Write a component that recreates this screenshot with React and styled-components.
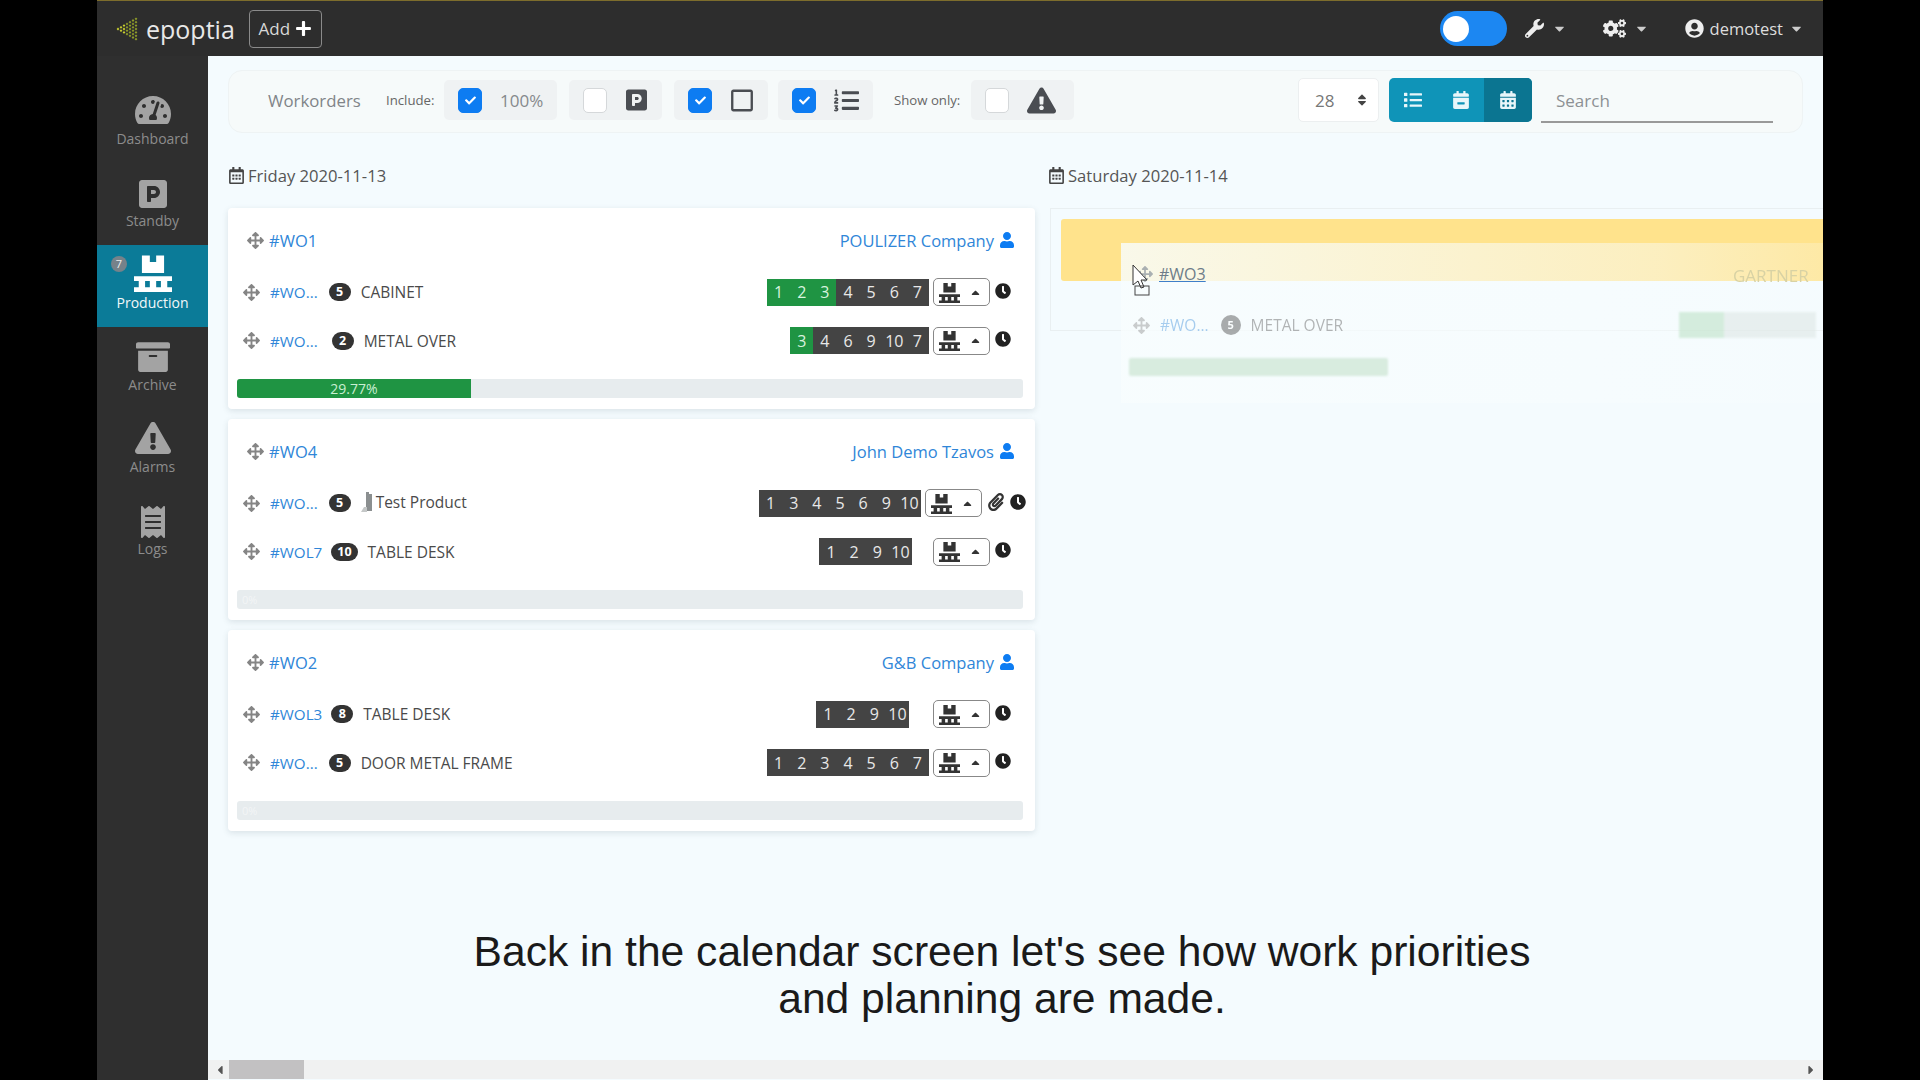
import React from "react";
import styled, { createGlobalStyle } from "styled-components";
import {
  FaArchive, FaArrowsAlt, FaCalendarAlt, FaCalendarMinus, FaCaretDown, FaCaretUp, FaCaretLeft, FaCaretRight,
  FaCheck, FaClock, FaCogs, FaExclamationTriangle, FaList, FaListOl, FaParking, FaPaperclip, FaPlus,
  FaReceipt, FaRegCalendarAlt, FaRegSquare, FaSort, FaTachometerAlt, FaUser, FaUserCircle, FaWrench,
} from "react-icons/fa";

const Global = createGlobalStyle`
  html, body { margin: 0; padding: 0; height: 100%; background: #000; overflow: hidden; }
  body { font-family: "Open Sans", "Noto Sans", sans-serif; color: #444; }
  * { box-sizing: border-box; }
`;

const Screen = styled.div`
  width: 1920px;
  height: 1080px;
  background: #000;
  display: flex;
  justify-content: center;
  position: relative;
`;

const Frame = styled.div`
  width: 1726px;
  height: 1080px;
  display: flex;
  flex-direction: column;
`;

const TopBar = styled.header`
  height: 56px;
  flex: none;
  background: #2d2d2d;
  border-top: 1px solid #7d6d2c;
  display: flex;
  align-items: center;
  padding-left: 19px;
  color: #e6e6e6;
`;

const Brand = styled.div`
  display: flex;
  align-items: center;
  font-size: 25px;
  gap: 8px;
  color: #e8e8e8;
`;

const AddButton = styled.button`
  margin-left: 14px;
  width: 73px;
  height: 38px;
  background: transparent;
  border: 1px solid #8a8a8a;
  border-radius: 4px;
  color: #d8d8d8;
  font: 17px "Open Sans", sans-serif;
  display: flex;
  align-items: center;
  justify-content: center;
  gap: 5px;
  padding: 0;
  svg { color: #fff; font-size: 17px; }
`;

const TopRight = styled.div`
  margin-left: auto;
  display: flex;
  align-items: center;
  padding-right: 19px;
`;

const Toggle = styled.div`
  width: 67px;
  height: 35px;
  border-radius: 18px;
  background: #1c87f2;
  display: flex;
  align-items: center;
  padding-left: 3px;
  margin-right: 18px;
  &::before {
    content: "";
    width: 26px;
    height: 26px;
    border-radius: 50%;
    background: #fff;
  }
`;

const TopMenu = styled.div`
  display: flex;
  align-items: center;
  gap: ${p => p.$gap || 8}px;
  margin-right: ${p => p.$after || 0}px;
  font-size: ${p => p.$text || 17}px;
  color: #ddd;
  & > svg:first-child { font-size: ${p => p.$icon || 19}px; color: #eee; }
  & > svg:last-child { font-size: 15px; color: #ccc; }
`;

const Body = styled.div`
  flex: 1;
  display: flex;
  min-height: 0;
`;

const Sidebar = styled.nav`
  width: 111px;
  flex: none;
  background: #2f2f2f;
  padding-top: 25px;
`;

const NavItem = styled.div`
  position: relative;
  height: 82px;
  display: flex;
  flex-direction: column;
  align-items: center;
  justify-content: flex-end;
  padding-bottom: 15px;
  gap: 1px;
  font-size: 14px;
  background: ${p => (p.$active ? "#0b7b98" : "transparent")};
  color: ${p => (p.$active ? "#f2f8fa" : "#8c8c8c")};
  svg { color: ${p => (p.$active ? "#fff" : "#a3a3a3")}; }
`;

const NavBadge = styled.span`
  position: absolute;
  left: 14px;
  top: 11px;
  width: 16px;
  height: 16px;
  border-radius: 50%;
  background: #76828a;
  color: #eee;
  font-size: 11px;
  line-height: 16px;
  text-align: center;
`;

const Main = styled.main`
  flex: 1;
  position: relative;
  background: #f4fbfe;
  overflow: hidden;
  padding: 14px 0 0 20px;
`;

const Toolbar = styled.div`
  width: 1575px;
  height: 63px;
  background: #f6fafa;
  border: 1px solid #eef3f4;
  border-radius: 14px;
  display: flex;
  align-items: center;
  padding: 0 29px 3px 39px;
`;

const ToolTitle = styled.span`
  width: 93px;
  font-size: 16.8px;
  color: #808488;
  white-space: nowrap;
`;

const ToolLabel = styled.span`
  width: ${p => p.$w}px;
  font-size: 13.2px;
  color: #666;
  margin-left: ${p => p.$left}px;
  margin-right: ${p => p.$right}px;
  white-space: nowrap;
`;

const Group = styled.div`
  width: ${p => p.$w}px;
  height: 40px;
  background: #eff2f3;
  border-radius: 5px;
  display: flex;
  align-items: center;
  gap: 18px;
  padding: 0 14px;
  margin-right: ${p => p.$after || 0}px;
  color: #4a4d52;
`;

const Check = styled.span`
  width: 24px;
  height: 25px;
  flex: none;
  border-radius: 5px;
  background: ${p => (p.$on ? "#0d7cf2" : "#fff")};
  border: 1px solid ${p => (p.$on ? "#0d7cf2" : "#d5d8da")};
  display: flex;
  align-items: center;
  justify-content: center;
  color: #fff;
  font-size: 11px;
`;

const Percent = styled.span`
  font-size: 17px;
  color: #85898c;
`;

const Picker = styled.div`
  margin-left: auto;
  width: 81px;
  height: 44px;
  background: #fff;
  border: 1px solid #eceff0;
  border-radius: 5px;
  display: flex;
  align-items: center;
  justify-content: space-between;
  padding: 0 9px 0 16px;
  font-size: 17px;
  color: #777;
  svg { color: #444; font-size: 14px; }
`;

const ViewButtons = styled.div`
  margin-left: 10px;
  display: flex;
  width: 143px;
  height: 44px;
  border-radius: 5px;
  overflow: hidden;
  background: #0f94b8;
`;

const ViewButton = styled.span`
  width: 48px;
  display: flex;
  align-items: center;
  justify-content: center;
  color: #e8f6fa;
  font-size: 18px;
  background: ${p => (p.$active ? "#0b7591" : "transparent")};
`;

const SearchBox = styled.div`
  margin-left: 9px;
  width: 232px;
  height: 45px;
  border-bottom: 2px solid #999;
  display: flex;
  align-items: center;
  padding: 2px 0 0 15px;
  font-size: 17px;
  color: #8d9194;
`;

const Columns = styled.div`
  display: grid;
  grid-template-columns: 807px 840px;
  column-gap: 13px;
  margin-top: 30px;
`;

const DayColumn = styled.section`
  display: flex;
  flex-direction: column;
  gap: 10px;
`;

const DayTitle = styled.div`
  height: 24px;
  margin-bottom: 11px;
  display: flex;
  align-items: center;
  gap: 3px;
  font-size: 16.6px;
  color: #555;
  svg { font-size: 17px; color: #444; }
`;

const Card = styled.article`
  background: #fff;
  border-radius: 4px;
  box-shadow: 0 2px 6px rgba(60, 80, 90, 0.14);
  padding: 10px 12px 11px 9px;
  height: 201px;
`;

const CardHead = styled.div`
  height: 44px;
  margin-bottom: 6px;
  display: flex;
  align-items: center;
  padding: 0 8px 0 10px;
  font-size: 16.5px;
`;

const Drag = styled(FaArrowsAlt)`
  color: #858585;
  font-size: 17px;
  flex: none;
`;

const Link = styled.a`
  color: ${p => (p.$under ? "#6d7c89" : "#2f86d8")};
  margin-left: ${p => p.$left}px;
  white-space: nowrap;
  text-decoration: ${p => (p.$under ? "underline #3f7fc9" : "none")};
`;

const Customer = styled.span`
  margin-left: auto;
  display: flex;
  align-items: center;
  gap: 5px;
  color: #2f86d8;
  white-space: nowrap;
  svg { color: #0d7cf2; font-size: 16px; }
`;

const Row = styled.div`
  height: 48.5px;
  display: flex;
  align-items: center;
  padding: 0 ${p => (p.$attach ? 0 : 12)}px 0 6px;
  margin-right: ${p => (p.$attach ? -3 : 0)}px;
  font-size: 15.5px;
  position: relative;
  ${Link} { font-size: 15.2px; }
`;

const Count = styled.span`
  margin-left: ${p => p.$left}px;
  min-width: 22px;
  height: 18px;
  padding: 0 6px;
  border-radius: 9px;
  background: #333;
  color: #fff;
  font-size: 12.5px;
  font-weight: 700;
  line-height: 18px;
  text-align: center;
  flex: none;
`;

const ProductName = styled.span`
  margin-left: ${p => (p.$thumb ? 3 : 10)}px;
  margin-top: ${p => (p.$thumb ? -3 : 0)}px;
  color: #4a4a4a;
  white-space: nowrap;
`;

const Steps = styled.div`
  margin-left: auto;
  margin-right: ${p => p.$gap}px;
  display: flex;
  height: 27px;
`;

const Step = styled.span`
  width: 23.15px;
  display: flex;
  align-items: center;
  justify-content: center;
  background: ${p => (p.$done ? "#1f9443" : "#444")};
  color: ${p => (p.$done ? "#d8f3df" : "#e8e8e8")};
  font-size: 16px;
`;

const StationButton = styled.div`
  width: 57px;
  height: 28px;
  flex: none;
  border: 1px solid #888;
  border-radius: 5px;
  background: #fff;
  display: flex;
  align-items: center;
  justify-content: space-between;
  padding: 0 7px 0 5px;
  color: #333;
  svg:last-child { font-size: 13px; }
`;

const Clock = styled(FaClock)`
  flex: none;
  margin-left: 5px;
  margin-top: -3px;
  font-size: 16px;
  color: #222;
`;

const Clip = styled(FaPaperclip)`
  flex: none;
  margin-left: 5px;
  margin-top: -3px;
  font-size: 18px;
  color: #333;
`;

const Progress = styled.div`
  margin-top: 14px;
  height: 19px;
  border-radius: 3px;
  background: #e7ecee;
  overflow: hidden;
  display: flex;
`;

const ProgressFill = styled.div`
  background: #1f9443;
  color: #c9efd2;
  font-size: 14px;
  line-height: 19px;
  text-align: center;
`;

const EmptyLabel = styled.span`
  padding-left: 5px;
  color: #f3f5f6;
  font-size: 11px;
  line-height: 19px;
`;

const DropCard = styled.div`
  height: 123px;
  margin-left: 2px;
  border: 1px solid #e9eff1;
  border-right: 0;
  padding: 10px 0 0 10px;
  position: relative;
`;

const Highlight = styled.div`
  height: 62px;
  background: #ffe38c;
  border-radius: 3px;
`;

const Ghost = styled.div`
  position: absolute;
  left: 70px;
  top: 34px;
  width: 720px;
  height: 160px;
  background: linear-gradient(90deg, rgba(248, 253, 254, 0.82), rgba(248, 253, 254, 0.45) 75%, rgba(248, 253, 254, 0.2));
  display: flex;
  flex-direction: column;
  padding: 16px 0 0 12px;
  font-size: 16px;
`;

const GhostHead = styled.div`
  display: flex;
  align-items: center;
  height: 30px;
  svg { color: #aab0b2; font-size: 16px; margin-left: 4px; }
`;

const GhostRow = styled.div`
  display: flex;
  align-items: center;
  height: 30px;
  margin-top: 21px;
  opacity: 0.4;
  color: #555;
  font-size: 15.5px;
`;

const GhostBadge = styled.span`
  margin-left: 12px;
  width: 20px;
  height: 20px;
  border-radius: 50%;
  background: #333;
  color: #fff;
  font-size: 11px;
  font-weight: 700;
  line-height: 20px;
  text-align: center;
`;

const GhostSteps = styled.div`
  position: absolute;
  left: 558px;
  top: 69px;
  width: 137px;
  height: 26px;
  background: linear-gradient(90deg, #bfe3c8 45px, #dfe8e6 45px);
  opacity: 0.6;
  filter: blur(1px);
`;

const GhostCustomer = styled.span`
  position: absolute;
  left: 612px;
  top: 21px;
  color: #d8d2a4;
  font-size: 17px;
  filter: blur(0.7px);
`;

const GhostBar = styled.div`
  width: 259px;
  height: 18px;
  margin: 18px 0 0 -4px;
  border-radius: 2px;
  background: #d8ecdf;
  filter: blur(1px);
`;

const Cursor = styled.svg`
  position: absolute;
  left: 1132px;
  top: 264px;
  z-index: 3;
`;

const Caption = styled.div`
  position: absolute;
  left: 97px;
  width: 1810px;
  top: 928px;
  text-align: center;
  font-family: "Liberation Sans", Arial, sans-serif;
  font-size: 42.6px;
  line-height: 47px;
  color: #1a1a1a;
  z-index: 5;
`;

const ScrollBar = styled.div`
  position: absolute;
  left: 0;
  right: 0;
  bottom: 1px;
  height: 19px;
  background: #f0f1f1;
  display: flex;
  align-items: center;
  justify-content: space-between;
  padding: 0 5px;
  color: #555;
  font-size: 14px;
`;

const ScrollThumb = styled.span`
  position: absolute;
  left: 21px;
  top: 0;
  width: 75px;
  height: 19px;
  background: #c2c1c2;
`;

const ProductThumb = styled.svg`
  margin-left: 10px;
  flex: none;
`;

// dithered arrowhead, tip on the left
const Logo = () => (
  <svg width="22" height="26" viewBox="0 0 22 26">
    {[0, 1, 2, 3, 4, 5, 6].map(col =>
      Array.from({ length: col + 1 }).map((_, i) => (
        <path
          key={col + "-" + i}
          d={`M${col * 3} ${13 - col * 1.7 + i * 3.4 - 1.4}l1.4 1.4-1.4 1.4-1.4-1.4z`}
          transform="translate(2 0)"
          fill={col < 3 ? "#c9cf2e" : "#8f9c2a"}
        />
      ))
    )}
  </svg>
);

const Pallet = ({ size = 22, color = "currentColor" }) => (
  <svg width={size} height={size} viewBox="0 0 24 24" fill={color}>
    <path d="M5 1h5v4h4V1h5v11H5z" />
    <path d="M0 14h24v3H0zM0 21h24v3H0zM3 17h4v4H3zM10 17h4v4h-4zM17 17h4v4h-4z" />
  </svg>
);

const navItems = [
  { label: "Dashboard", icon: <FaTachometerAlt size={36} /> },
  { label: "Standby", icon: <FaParking size={32} /> },
  { label: "Production", icon: <Pallet size={38} />, active: true, badge: 7 },
  { label: "Archive", icon: <FaArchive size={34} /> },
  { label: "Alarms", icon: <FaExclamationTriangle size={36} /> },
  { label: "Logs", icon: <FaReceipt size={32} /> },
];

const orders = [
  {
    id: "#WO1", customer: "POULIZER Company", progress: 29.77,
    rows: [
      { id: "#WO...", count: 5, name: "CABINET", steps: [1, 2, 3, 4, 5, 6, 7], done: 3, countLeft: 11 },
      { id: "#WO...", count: 2, name: "METAL OVER", steps: [3, 4, 6, 9, 10, 7], done: 1, countLeft: 14 },
    ],
  },
  {
    id: "#WO4", customer: "John Demo Tzavos",
    rows: [
      { id: "#WO...", count: 5, name: "Test Product", steps: [1, 3, 4, 5, 6, 9, 10], thumb: true, attach: true, countLeft: 11 },
      { id: "#WOL7", count: 10, name: "TABLE DESK", steps: [1, 2, 9, 10], gap: 21, countLeft: 9 },
    ],
  },
  {
    id: "#WO2", customer: "G&B Company",
    rows: [
      { id: "#WOL3", count: 8, name: "TABLE DESK", steps: [1, 2, 9, 10], gap: 24, countLeft: 9 },
      { id: "#WO...", count: 5, name: "DOOR METAL FRAME", steps: [1, 2, 3, 4, 5, 6, 7], countLeft: 11 },
    ],
  },
];

const OrderRow = ({ row }) => (
  <Row $attach={row.attach}>
    <Drag />
    <Link $left={10}>{row.id}</Link>
    <Count $left={row.countLeft}>{row.count}</Count>
    {row.thumb && (
      <ProductThumb width="12" height="22" viewBox="0 0 12 22">
        <path d="M5 0h3v2h3v17H5z" fill="#8b8f90" />
        <path d="M3 15h3v5H0z" fill="#c5c8c8" />
      </ProductThumb>
    )}
    <ProductName $thumb={row.thumb}>{row.name}</ProductName>
    <Steps $gap={row.gap || 4}>
      {row.steps.map((s, i) => (
        <Step key={i} $done={i < (row.done || 0)}>{s}</Step>
      ))}
    </Steps>
    <StationButton>
      <Pallet size={21} />
      <FaCaretUp />
    </StationButton>
    {row.attach && <Clip />}
    <Clock />
  </Row>
);

const OrderCard = ({ order }) => (
  <Card>
    <CardHead>
      <Drag />
      <Link $left={5}>{order.id}</Link>
      <Customer>{order.customer}<FaUser /></Customer>
    </CardHead>
    {order.rows.map((r, i) => <OrderRow key={i} row={r} />)}
    <Progress>
      {order.progress
        ? <ProgressFill style={{ width: order.progress + "%" }}>{order.progress}%</ProgressFill>
        : <EmptyLabel>0%</EmptyLabel>}
    </Progress>
  </Card>
);

export default function App() {
  return (
    <>
      <Global />
      <Screen>
        <Frame>
          <TopBar>
            <Brand><Logo />epoptia</Brand>
            <AddButton>Add<FaPlus /></AddButton>
            <TopRight>
              <Toggle />
              <TopMenu $after={36}><FaWrench /><FaCaretDown /></TopMenu>
              <TopMenu $after={36} $icon={23}><FaCogs /><FaCaretDown /></TopMenu>
              <TopMenu $gap={6} $text={16.5}><FaUserCircle />demotest<FaCaretDown /></TopMenu>
            </TopRight>
          </TopBar>
          <Body>
            <Sidebar>
              {navItems.map(item => (
                <NavItem key={item.label} $active={item.active}>
                  {item.badge && <NavBadge>{item.badge}</NavBadge>}
                  {item.icon}
                  <span>{item.label}</span>
                </NavItem>
              ))}
            </Sidebar>
            <Main>
              <Toolbar>
                <ToolTitle>Workorders</ToolTitle>
                <ToolLabel $w={47} $left={25} $right={11}>Include:</ToolLabel>
                <Group $w={113} $after={12}><Check $on><FaCheck /></Check><Percent>100%</Percent></Group>
                <Group $w={93} $after={12}><Check /><FaParking size={24} /></Group>
                <Group $w={94} $after={10}><Check $on><FaCheck /></Check><FaRegSquare size={25} /></Group>
                <Group $w={95}><Check $on><FaCheck /></Check><FaListOl size={27} /></Group>
                <ToolLabel $w={68} $left={21} $right={9}>Show only:</ToolLabel>
                <Group $w={103}><Check /><FaExclamationTriangle size={29} /></Group>
                <Picker>28<FaSort /></Picker>
                <ViewButtons>
                  <ViewButton><FaList /></ViewButton>
                  <ViewButton><FaCalendarMinus /></ViewButton>
                  <ViewButton $active><FaCalendarAlt /></ViewButton>
                </ViewButtons>
                <SearchBox>Search</SearchBox>
              </Toolbar>
              <Columns>
                <DayColumn>
                  <DayTitle><FaRegCalendarAlt />Friday 2020-11-13</DayTitle>
                  {orders.map(o => <OrderCard key={o.id} order={o} />)}
                </DayColumn>
                <DayColumn>
                  <DayTitle><FaRegCalendarAlt />Saturday 2020-11-14</DayTitle>
                  <DropCard>
                    <Highlight />
                    <Ghost>
                      <GhostHead>
                        <FaArrowsAlt />
                        <Link $left={6} $under>#WO3</Link>
                      </GhostHead>
                      <GhostRow>
                        <Drag />
                        <Link $left={10}>#WO...</Link>
                        <GhostBadge>5</GhostBadge>
                        <ProductName>METAL OVER</ProductName>
                      </GhostRow>
                      <GhostBar />
                      <GhostCustomer>GARTNER</GhostCustomer>
                      <GhostSteps />
                    </Ghost>
                  </DropCard>
                </DayColumn>
              </Columns>
              <ScrollBar>
                <FaCaretLeft />
                <ScrollThumb />
                <FaCaretRight />
              </ScrollBar>
            </Main>
          </Body>
        </Frame>
        <Cursor width="20" height="32" viewBox="0 0 20 32">
          <path d="M1 1v20l5-4 3 7 3-1-3-7h6z" fill="#fff" stroke="#333" strokeWidth="1" />
          <rect x="3" y="22" width="14" height="9" fill="none" stroke="#444" strokeWidth="1" />
        </Cursor>
        <Caption>
          Back in the calendar screen let's see how work priorities<br />
          and planning are made.
        </Caption>
      </Screen>
    </>
  );
}
